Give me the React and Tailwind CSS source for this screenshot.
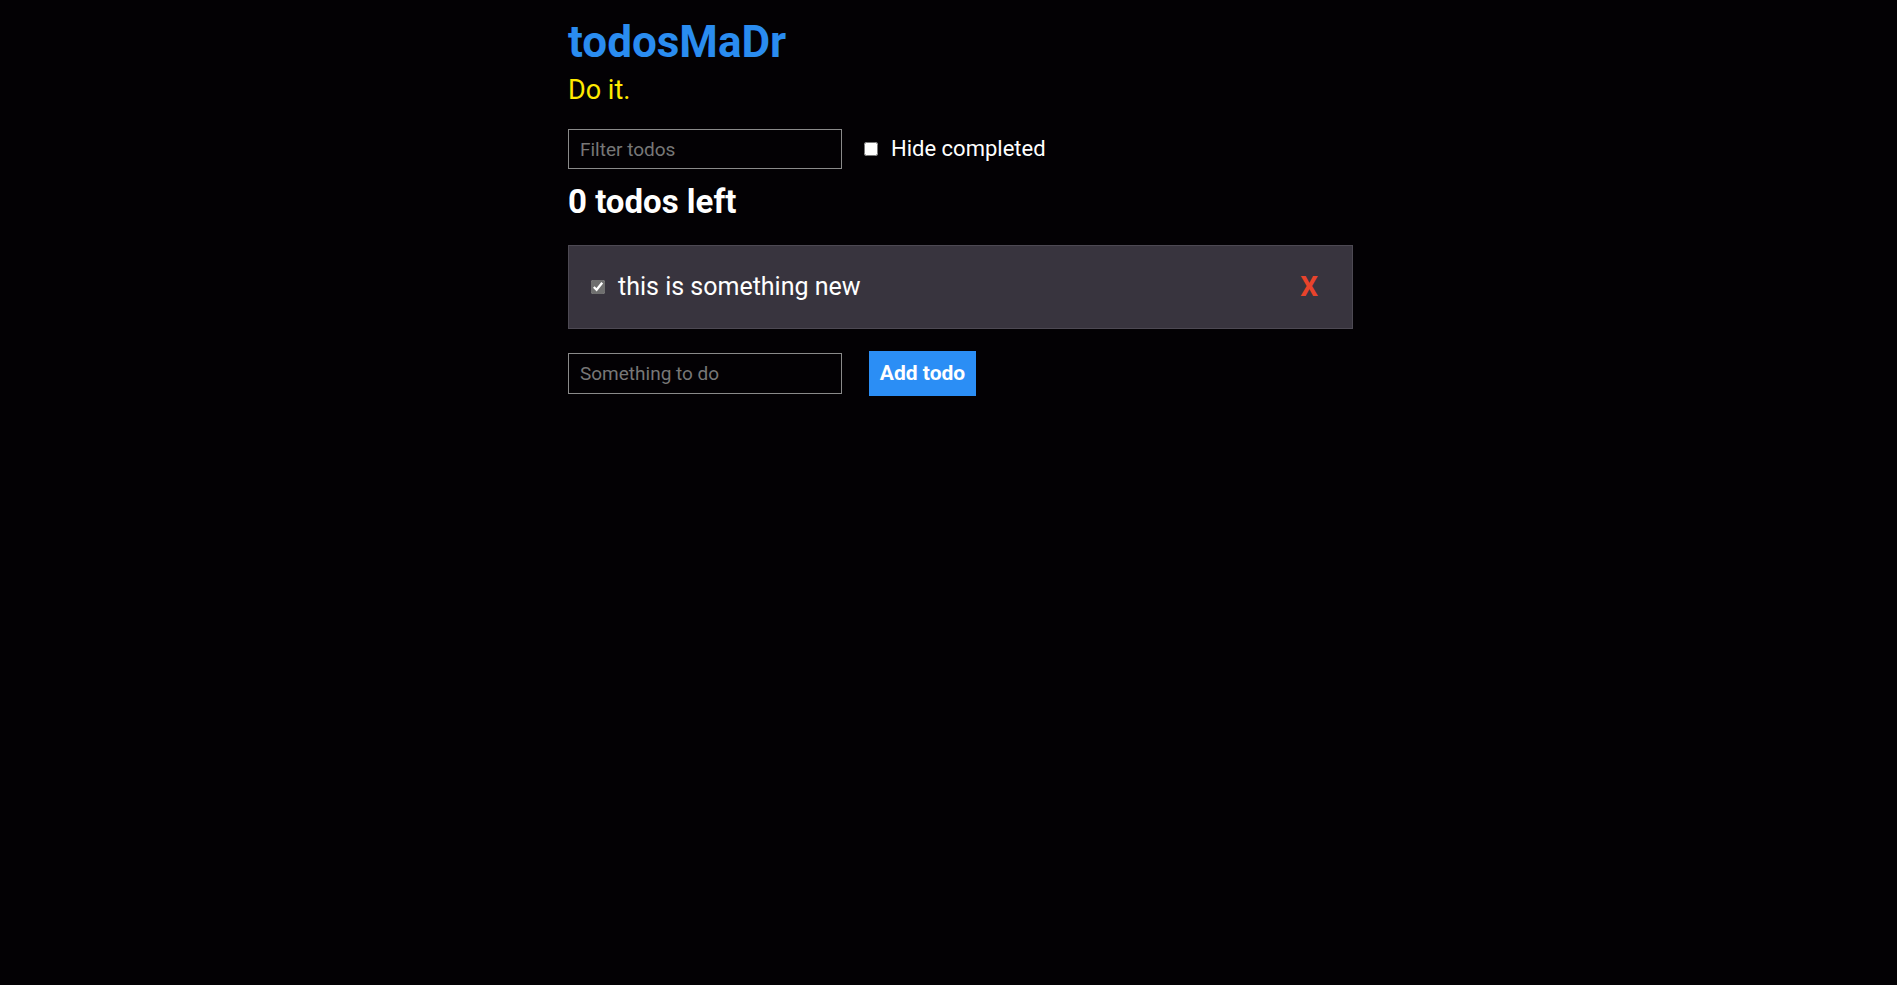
// App.jsx - todosMaDr 할 일 목록
import React, { useState } from 'react';

const App = () => {
  const [todos, setTodos] = useState([
    { id: 1, text: 'this is something new', done: true },
  ]);
  const [filter, setFilter] = useState('');
  const [hideCompleted, setHideCompleted] = useState(false);
  const [newTodo, setNewTodo] = useState('');

  const left = todos.filter((t) => !t.done).length;

  const visible = todos.filter((t) => {
    if (hideCompleted && t.done) return false;
    return t.text.toLowerCase().includes(filter.toLowerCase());
  });

  const toggle = (id) => {
    setTodos((prev) =>
      prev.map((t) => (t.id === id ? { ...t, done: !t.done } : t))
    );
  };

  const remove = (id) => {
    setTodos((prev) => prev.filter((t) => t.id !== id));
  };

  const addTodo = (e) => {
    e.preventDefault();
    if (!newTodo.trim()) return;
    setTodos((prev) => [...prev, { id: Date.now(), text: newTodo, done: false }]);
    setNewTodo('');
  };

  return (
    <div className="min-h-screen bg-[#030104] pl-[24px] font-['Roboto',sans-serif] text-white">
      <div className="mx-auto w-[785px] pt-[16px]">
        <h1 className="text-[44px] leading-[52px] font-bold text-[#2a8cf0]">
          todosMaDr
        </h1>
        <p className="mt-[6px] text-[27px] leading-[32px] text-[#ffea00]">
          Do it.
        </p>

        <div className="mt-[23px] flex items-center">
          <input
            type="text"
            value={filter}
            onChange={(e) => setFilter(e.target.value)}
            placeholder="Filter todos"
            className="h-[40px] w-[274px] border border-[#8a8a8a] bg-transparent px-[11px] text-[19px] text-white placeholder:text-[#777777] outline-none"
          />
          <label className="ml-[22px] flex items-center text-[22px] leading-[26px]">
            <input
              type="checkbox"
              checked={hideCompleted}
              onChange={() => setHideCompleted(!hideCompleted)}
              className="h-[14px] w-[14px]"
            />
            <span className="ml-[13px]">Hide completed</span>
          </label>
        </div>

        <h2 className="mt-[13px] text-[33px] leading-[40px] font-bold">
          {left} todos left
        </h2>

        <ul className="mt-[23px]">
          {visible.map((t) => (
            <li
              key={t.id}
              className="flex h-[84px] items-center border border-[#4d4953] bg-[#38343e] pl-[22px] pr-[34px]"
            >
              <input
                type="checkbox"
                checked={t.done}
                onChange={() => toggle(t.id)}
                className="h-[14px] w-[14px] accent-[#6f6f6f]"
              />
              <span className="ml-[13px] flex-1 text-[25px] leading-[30px]">
                {t.text}
              </span>
              <button
                onClick={() => remove(t.id)}
                className="text-[28px] leading-[32px] font-bold text-[#e8432b]"
              >
                X
              </button>
            </li>
          ))}
        </ul>

        <form onSubmit={addTodo} className="mt-[22px] flex items-center">
          <input
            type="text"
            value={newTodo}
            onChange={(e) => setNewTodo(e.target.value)}
            placeholder="Something to do"
            className="h-[41px] w-[274px] border border-[#8a8a8a] bg-transparent px-[11px] text-[19px] text-white placeholder:text-[#777777] outline-none"
          />
          <button
            type="submit"
            className="ml-[27px] h-[45px] w-[107px] bg-[#2b8ef5] text-[21px] font-bold text-white"
          >
            Add todo
          </button>
        </form>
      </div>
    </div>
  );
};

export default App;
